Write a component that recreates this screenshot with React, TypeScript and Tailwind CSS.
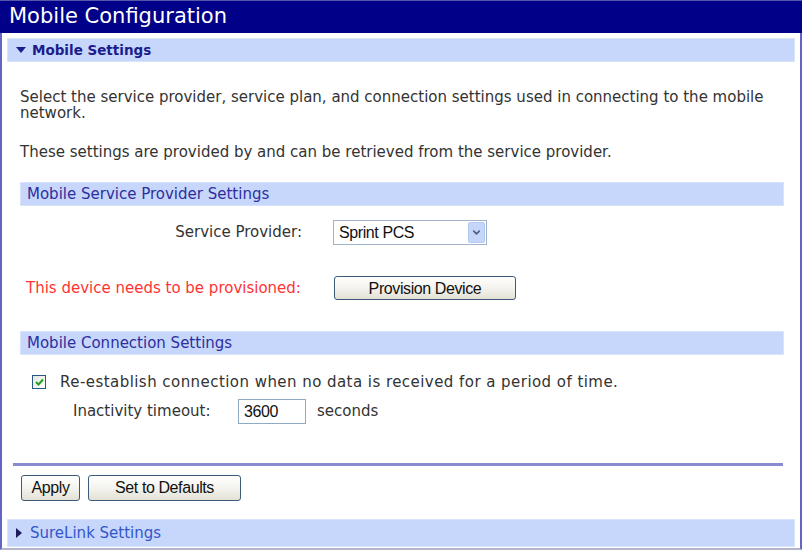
import { ChevronDown } from 'lucide-react';

function XpButton({ label, width }: { label: string; width: string }) {
  return (
    <button
      className={`${width} h-full rounded-[3px] border border-[#3d5a78] bg-gradient-to-b from-white via-[#f4f3ee] to-[#e3e1d6] text-[16px] tracking-[-0.4px] text-[#111] font-['Liberation_Sans',Arial,sans-serif]`}
    >
      {label}
    </button>
  );
}

function SubHeader({ title }: { title: string }) {
  return (
    <div className="mr-[11px] h-[24px] flex items-center pl-[6px] bg-[#c6d7fb] border border-[#d9e4fc] text-[15px] text-[#2e2e9e]">
      {title}
    </div>
  );
}

export default function App() {
  return (
    <div className="w-[803px] h-[550px] bg-white overflow-hidden font-['DejaVu_Sans',Verdana,sans-serif] text-[#333]">
      {/* Title bar */}
      <div className="h-[33px] w-[802px] bg-[#000088] border-t border-[#5555aa] flex items-center px-[9px] text-white text-[21px]">
        Mobile Configuration
      </div>

      {/* Panel */}
      <div className="w-[802px] h-[517px] border-x-2 border-b-2 border-x-[#6464c4] border-b-[#b4b4cc] px-[5px] pt-[5px] flex flex-col">
        {/* Mobile Settings header */}
        <div className="h-[24px] flex items-center gap-[6px] pl-[8px] bg-[#c6d7fb] border border-[#d9e4fc] text-[13.5px] font-bold text-[#1c1c8c]">
          <svg width="10" height="8" viewBox="0 0 10 8">
            <path d="M0 1h10L5 7z" fill="#1c1c8c" />
          </svg>
          Mobile Settings
        </div>

        <div className="pl-[13px]">
          <p className="mt-[27px] text-[15px] leading-[16px]">
            Select the service provider, service plan, and connection settings used in connecting to the mobile network.
          </p>
          <p className="mt-[23px] text-[15px] leading-[16px]">
            These settings are provided by and can be retrieved from the service provider.
          </p>

          <div className="mt-[22px]">
            <SubHeader title="Mobile Service Provider Settings" />
          </div>

          {/* Service provider */}
          <div className="mt-[14px] h-[25px] flex items-center text-[15px]">
            <div className="w-[313px] pr-[31px] text-right">Service Provider:</div>
            <div className="w-[154px] h-full border border-[#9eb4cc] flex items-center justify-between pl-[5px] pr-[1px] font-['Liberation_Sans',Arial,sans-serif] text-[16px] tracking-[-0.4px] text-[#111]">
              Sprint PCS
              <div className="w-[17px] h-[21px] bg-[#c5d6fb] border border-[#b5c8f0] rounded-[2px] flex items-center justify-center">
                <ChevronDown className="w-[11px] h-[11px] text-[#4d6185]" strokeWidth={3.5} />
              </div>
            </div>
          </div>

          {/* Provision */}
          <div className="mt-[31px] h-[24px] flex items-center text-[15px]">
            <div className="w-[314px] pl-[6px] text-[#ff3333]">This device needs to be provisioned:</div>
            <XpButton label="Provision Device" width="w-[182px]" />
          </div>

          <div className="mt-[31px]">
            <SubHeader title="Mobile Connection Settings" />
          </div>

          {/* Checkbox row */}
          <div className="mt-[19px] h-[16px] flex items-center text-[15px]">
            <div className="ml-[12px] w-[14px] h-[14px] border border-[#2a5885] bg-gradient-to-br from-[#e4e4e0] to-white flex items-center justify-center">
              <svg width="9" height="8" viewBox="0 0 9 8">
                <path d="M1 4l2.5 2.5L8 1.5" fill="none" stroke="#22a022" strokeWidth="2" />
              </svg>
            </div>
            <span className="ml-[14px] tracking-[0.45px]">Re-establish connection when no data is received for a period of time.</span>
          </div>

          {/* Inactivity */}
          <div className="mt-[9px] h-[25px] flex items-center text-[15px]">
            <span className="ml-[53px] w-[165px]">Inactivity timeout:</span>
            <div className="w-[68px] h-full border border-[#8fa9c9] flex items-center pl-[5px] font-['Liberation_Sans',Arial,sans-serif] text-[16px] tracking-[-0.4px] text-[#111]">
              3600
            </div>
            <span className="ml-[11px]">seconds</span>
          </div>
        </div>

        {/* Divider + buttons */}
        <div className="mt-[39px] ml-[6px] mr-[12px] h-[3px] bg-[#8a8ad0]" />
        <div className="mt-[9px] ml-[14px] h-[26px] flex gap-[8px]">
          <XpButton label="Apply" width="w-[59px]" />
          <XpButton label="Set to Defaults" width="w-[153px]" />
        </div>

        {/* SureLink */}
        <div className="mt-[18px] h-[28px] flex items-center gap-[8px] pl-[8px] bg-[#c6d7fb] border border-[#d9e4fc] text-[15px] text-[#3355cc]">
          <svg width="6" height="10" viewBox="0 0 6 10">
            <path d="M0 0v10l6-5z" fill="#1c1c5c" />
          </svg>
          SureLink Settings
        </div>
      </div>
    </div>
  );
}
